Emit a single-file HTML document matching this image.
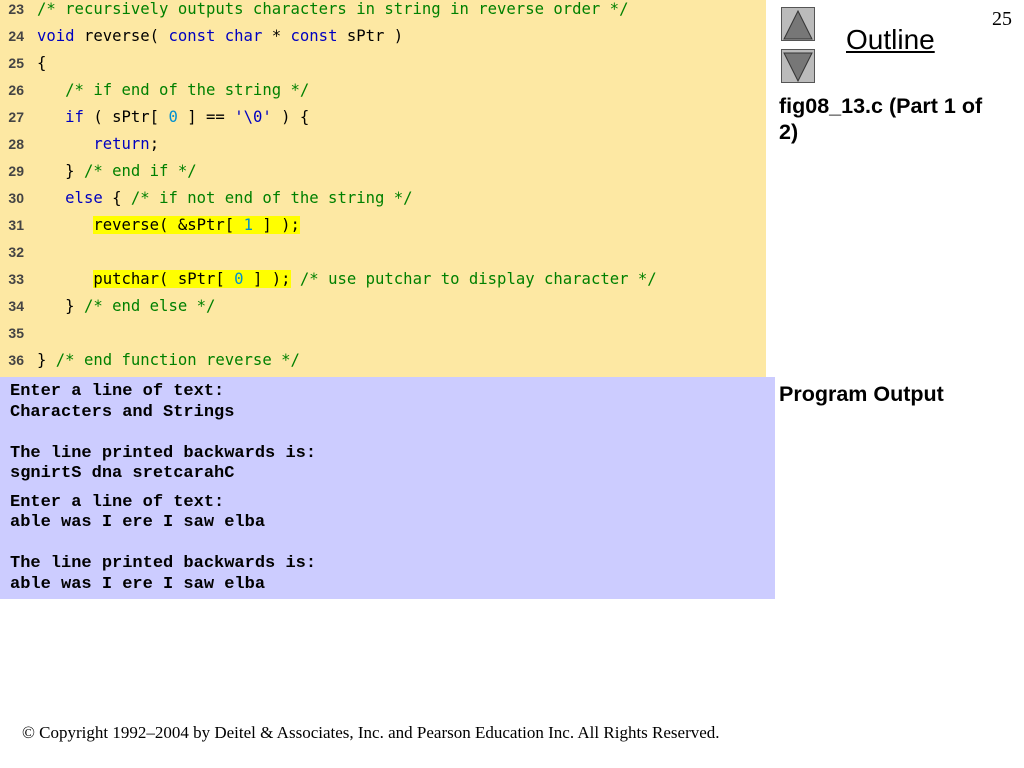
<!DOCTYPE html>
<html><head><meta charset="utf-8"><style>
body{margin:0;width:1024px;height:768px;position:relative;background:#fff;overflow:hidden;font-family:"Liberation Sans",sans-serif}
#code{position:absolute;left:0;top:0;width:766px;height:377px;background:#FDE8A3}
.ln{position:absolute;left:0;width:24px;text-align:right;font:bold 14px "Liberation Sans",sans-serif;color:#444}
.cd{position:absolute;left:37px;font:15.6px "DejaVu Sans Mono",monospace;white-space:pre;color:#000}
.c{color:#008000}.k{color:#0000c0}.n{color:#0090d0}.h{background:#ffff00}
#out{position:absolute;left:0;top:377px;width:775px;height:222px;background:#CCCCFF}
.o{position:absolute;left:10px;font:bold 17px "Liberation Mono",monospace;white-space:pre;color:#000}
.arr{position:absolute;left:781px;width:34px;height:34px;background:#bbb;border:1px solid #555;box-sizing:border-box}
.side{position:absolute;left:779px;font-weight:bold;font-size:21.5px;line-height:26px}
</style></head><body>
<div id="code">
<div class="ln" style="top:1px">23</div><div class="cd" style="top:0px"><span class="c">/* recursively outputs characters in string in reverse order */</span></div>
<div class="ln" style="top:28px">24</div><div class="cd" style="top:27px"><span class="k">void</span> reverse( <span class="k">const char</span> * <span class="k">const</span> sPtr )</div>
<div class="ln" style="top:55px">25</div><div class="cd" style="top:54px">{</div>
<div class="ln" style="top:82px">26</div><div class="cd" style="top:81px">   <span class="c">/* if end of the string */</span></div>
<div class="ln" style="top:109px">27</div><div class="cd" style="top:108px">   <span class="k">if</span> ( sPtr[ <span class="n">0</span> ] == <span class="k">'\0'</span> ) {</div>
<div class="ln" style="top:136px">28</div><div class="cd" style="top:135px">      <span class="k">return</span>;</div>
<div class="ln" style="top:163px">29</div><div class="cd" style="top:162px">   } <span class="c">/* end if */</span></div>
<div class="ln" style="top:190px">30</div><div class="cd" style="top:189px">   <span class="k">else</span> { <span class="c">/* if not end of the string */</span></div>
<div class="ln" style="top:217px">31</div><div class="cd" style="top:216px">      <span class="h">reverse( &amp;sPtr[ <span class="n">1</span> ] );</span></div>
<div class="ln" style="top:244px">32</div>
<div class="ln" style="top:271px">33</div><div class="cd" style="top:270px">      <span class="h">putchar( sPtr[ <span class="n">0</span> ] );</span> <span class="c">/* use putchar to display character */</span></div>
<div class="ln" style="top:298px">34</div><div class="cd" style="top:297px">   } <span class="c">/* end else */</span></div>
<div class="ln" style="top:325px">35</div>
<div class="ln" style="top:352px">36</div><div class="cd" style="top:351px">} <span class="c">/* end function reverse */</span></div>
</div>
<div id="out"></div>
<div class="o" style="top:382px">Enter a line of text:</div>
<div class="o" style="top:403px">Characters and Strings</div>
<div class="o" style="top:444px">The line printed backwards is:</div>
<div class="o" style="top:464px">sgnirtS dna sretcarahC</div>
<div class="o" style="top:493px">Enter a line of text:</div>
<div class="o" style="top:513px">able was I ere I saw elba</div>
<div class="o" style="top:554px">The line printed backwards is:</div>
<div class="o" style="top:575px">able was I ere I saw elba</div>
<div class="arr" style="top:7px"><svg width="32" height="32" viewBox="0 0 32 32"><polygon points="16,3 30,31 2,31" fill="#777" stroke="#333" stroke-width="1"/></svg></div>
<div class="arr" style="top:49px"><svg width="32" height="32" viewBox="0 0 32 32"><polygon points="2,3 30,3 16,31" fill="#777" stroke="#333" stroke-width="1"/></svg></div>
<div style="position:absolute;left:846px;top:24px;font-size:28px;text-decoration:underline;color:#000">Outline</div>
<div style="position:absolute;left:992px;top:8px;font:20px 'Liberation Serif',serif">25</div>
<div class="side" style="top:93px;width:225px">fig08_13.c (Part 1 of 2)</div>
<div class="side" style="top:381px">Program Output</div>
<div style="position:absolute;left:22px;top:723px;font:17px 'Liberation Serif',serif">© Copyright 1992–2004 by Deitel &amp; Associates, Inc. and Pearson Education Inc. All Rights Reserved.</div>
</body></html>
